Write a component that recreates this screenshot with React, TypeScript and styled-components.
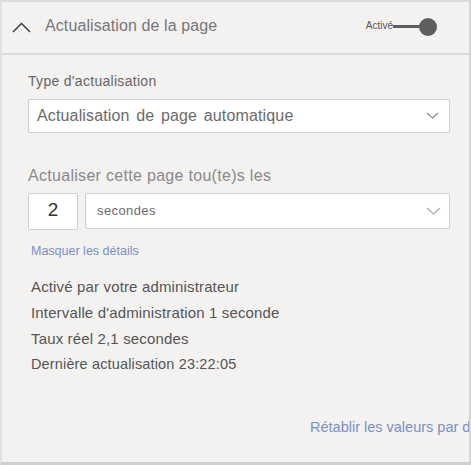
import React from "react";
import styled, { createGlobalStyle } from "styled-components";

const Global = createGlobalStyle`
  html, body { margin: 0; padding: 0; background: #f3f2f1; }
  body { font-family: "Liberation Sans", Arial, sans-serif; }
`;

const Panel = styled.div`
  box-sizing: border-box;
  width: 471px;
  height: 465px;
  background: #f3f2f1;
  border-top: 2px solid #dddcdb;
  border-left: 2px solid #e1e0df;
  border-right: 2px solid #d6d5d4;
  border-bottom: 3px solid #d0cfce;
  display: flex;
  flex-direction: column;
  overflow: hidden;
`;

const Header = styled.div`
  height: 51px;
  display: flex;
  align-items: center;
  padding-left: 10px;
  padding-right: 32px;
  border-bottom: 2px solid #dddcdb;
  flex-shrink: 0;
`;

const Title = styled.div`
  flex: 1;
  margin-left: 14px;
  font-size: 16px;
  letter-spacing: 0.1px;
  color: #777;
  padding-bottom: 3px;
`;

const ToggleWrap = styled.div`
  display: flex;
  align-items: center;
  padding-bottom: 2px;
`;

const ToggleLabel = styled.span`
  font-size: 10px;
  color: #555;
  padding-bottom: 3px;
`;

const Track = styled.div`
  width: 28px;
  height: 3px;
  background: #5f5e5d;
`;

const Knob = styled.div`
  width: 18px;
  height: 18px;
  border-radius: 50%;
  background: #5f5e5d;
  margin-left: -2px;
`;

const Body = styled.div`
  flex: 1;
  padding: 18px 19px 0 26px;
  display: flex;
  flex-direction: column;
`;

const Label = styled.div<{ $size: number; $color: string; $mt?: number }>`
  font-size: ${(p) => p.$size}px;
  color: ${(p) => p.$color};
  letter-spacing: 0.3px;
  line-height: 1.2;
  margin-top: ${(p) => p.$mt ?? 0}px;
`;

const SelectBox = styled.div<{ $h: number }>`
  box-sizing: border-box;
  height: ${(p) => p.$h}px;
  background: #fff;
  border: 1.5px solid #cfcecd;
  border-radius: 2px;
  display: flex;
  align-items: center;
  justify-content: space-between;
  flex: 1;
`;

const SelectText = styled.span<{ $size: number; $ws: number; $ls: number; $pad: number }>`
  font-size: ${(p) => p.$size}px;
  color: #6a6a6a;
  word-spacing: ${(p) => p.$ws}px;
  letter-spacing: ${(p) => p.$ls}px;
  padding-left: ${(p) => p.$pad}px;
`;

const SelectRow = styled.div`
  display: flex;
  margin-top: 9px;
`;

const Row = styled.div`
  display: flex;
  gap: 7px;
  margin-top: 8px;
`;

const NumBox = styled.div`
  box-sizing: border-box;
  width: 50px;
  height: 37px;
  background: #fff;
  border: 1.5px solid #cfcecd;
  border-radius: 2px;
  display: flex;
  align-items: center;
  justify-content: center;
  font-size: 19px;
  color: #333;
  padding-bottom: 2px;
`;

const Link = styled.div<{ $size: number; $mt?: number; $ml?: number }>`
  font-size: ${(p) => p.$size}px;
  color: #7a8fc6;
  white-space: nowrap;
  margin-top: ${(p) => p.$mt ?? 0}px;
  margin-left: ${(p) => p.$ml ?? 0}px;
`;

const Info = styled.div<{ $size: number; $mt: number }>`
  font-size: ${(p) => p.$size}px;
  color: #555;
  letter-spacing: 0.15px;
  margin-top: ${(p) => p.$mt}px;
  margin-left: 3px;
`;

const Footer = styled.div`
  margin-top: auto;
  padding-bottom: 27px;
  padding-left: 282px;
  overflow: hidden;
  white-space: nowrap;
  margin-right: -19px;
`;

const Chevron = ({ w, h, color, mr }: { w: number; h: number; color: string; mr: number }) => (
  <svg width={w + 2} height={h + 2} style={{ marginRight: mr }} viewBox={`-1 -1 ${w + 2} ${h + 2}`}>
    <polyline points={`0,0 ${w / 2},${h} ${w},0`} fill="none" stroke={color} strokeWidth="1.2" />
  </svg>
);

export default function App() {
  return (
    <>
      <Global />
      <Panel>
        <Header>
          <svg width="19" height="11" viewBox="0 0 19 11">
            <polyline points="1,10 9.5,1.5 18,10" fill="none" stroke="#333" strokeWidth="1.3" />
          </svg>
          <Title>Actualisation de la page</Title>
          <ToggleWrap>
            <ToggleLabel>Activé</ToggleLabel>
            <Track />
            <Knob />
          </ToggleWrap>
        </Header>
        <Body>
          <Label $size={14} $color="#666">Type d'actualisation</Label>
          <SelectRow>
            <SelectBox $h={34}>
              <SelectText $size={16} $ws={2} $ls={0.15} $pad={8}>Actualisation de page automatique</SelectText>
              <Chevron w={11} h={5} color="#888" mr={10} />
            </SelectBox>
          </SelectRow>
          <Label $size={16} $color="#8a8a8a" $mt={33}>Actualiser cette page tou(te)s les</Label>
          <Row>
            <NumBox>2</NumBox>
            <SelectBox $h={36}>
              <SelectText $size={13} $ws={0} $ls={0.4} $pad={11}>secondes</SelectText>
              <Chevron w={13} h={6} color="#aaa" mr={8} />
            </SelectBox>
          </Row>
          <Link $size={12.5} $mt={14} $ml={3}>Masquer les détails</Link>
          <Info $size={15} $mt={20}>Activé par votre administrateur</Info>
          <Info $size={15} $mt={9}>Intervalle d'administration 1 seconde</Info>
          <Info $size={15} $mt={9}>Taux réel 2,1 secondes</Info>
          <Info $size={14.5} $mt={9}>Dernière actualisation 23:22:05</Info>
          <Footer>
            <Link $size={14.5}>Rétablir les valeurs par défaut</Link>
          </Footer>
        </Body>
      </Panel>
    </>
  );
}
